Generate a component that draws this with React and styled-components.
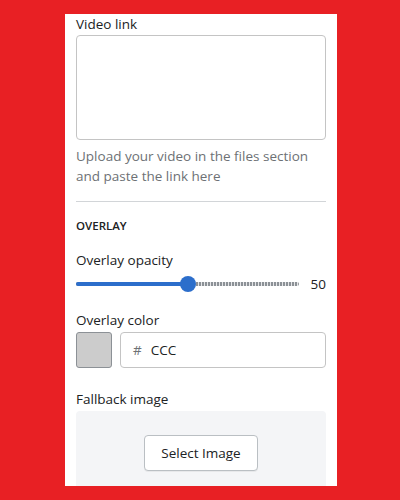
import React from "react";
import styled, { createGlobalStyle } from "styled-components";

const Global = createGlobalStyle`
  html, body { margin: 0; padding: 0; background: #e82024; }
  body { font-family: "Open Sans", "Noto Sans", sans-serif; }
  * { box-sizing: border-box; }
`;

const Page = styled.div`
  width: 400px;
  height: 500px;
  padding: 14px 0 0 65px;
  overflow: hidden;
`;

const Panel = styled.div`
  width: 272px;
  height: 472px;
  background: #fff;
  padding: 0 11px;
  overflow: hidden;
`;

const Label = styled.div`
  font-size: 13.5px;
  line-height: 20px;
  color: #202223;
  margin-top: ${(p) => p.$mt || 0}px;
`;

const TextArea = styled.div`
  margin-top: 1px;
  height: 105px;
  border: 1px solid #c4c4c4;
  border-radius: 4px;
  background: #fff;
`;

const Help = styled.div`
  margin-top: 6px;
  font-size: 13.5px;
  line-height: 20px;
  color: #6d7175;
`;

const Divider = styled.div`
  margin-top: 15px;
  height: 1px;
  background: #d2d5d8;
`;

const Heading = styled.div`
  margin-top: 16px;
  font-size: 11.5px;
  line-height: 16px;
  font-weight: 600;
  text-transform: uppercase;
  color: #202223;
`;

const SliderRow = styled.div`
  margin-top: 4px;
  height: 20px;
  display: flex;
  align-items: center;
`;

const Track = styled.div`
  position: relative;
  width: 223px;
  height: 4px;
  border-radius: 2px;
  background: repeating-linear-gradient(90deg, #8c9196 0 2px, #e4e5e7 2px 3px);
`;

const Fill = styled.div`
  position: absolute;
  left: 0;
  top: 0;
  bottom: 0;
  border-radius: 2px;
  background: #2c6ecb;
`;

const Thumb = styled.div`
  position: absolute;
  top: 50%;
  width: 16px;
  height: 16px;
  margin: -8px 0 0 -8px;
  border-radius: 50%;
  background: #2c6ecb;
`;

const Value = styled.div`
  flex: 1;
  text-align: right;
  font-size: 13.5px;
  color: #202223;
`;

const ColorRow = styled.div`
  margin-top: 2px;
  display: flex;
  gap: 8px;
`;

const Swatch = styled.div`
  width: 36px;
  height: 36px;
  border-radius: 3px;
  border: 1px solid #8c9196;
  background: #ccc;
`;

const ColorInput = styled.div`
  flex: 1;
  height: 36px;
  border: 1px solid #c4c4c4;
  border-radius: 4px;
  display: flex;
  align-items: center;
  padding-left: 12px;
  gap: 9px;
  font-size: 13.5px;
  color: #202223;
`;

const Hash = styled.span`
  color: #6d7175;
`;

const Dropzone = styled.div`
  margin-top: 2px;
  background: #f4f5f7;
  border-radius: 4px;
  padding: 24px 0 30px;
  display: flex;
  justify-content: center;
`;

const Button = styled.button`
  height: 36px;
  padding: 0 16px;
  border: 1px solid #babfc3;
  border-radius: 4px;
  background: #fff;
  font-family: inherit;
  font-size: 13.5px;
  font-weight: 500;
  color: #202223;
  box-shadow: 0 1px 0 rgba(0, 0, 0, 0.05);
`;

export default function App() {
  const value = 50;
  return (
    <>
      <Global />
      <Page>
        <Panel>
          <Label>Video link</Label>
          <TextArea />
          <Help>
            Upload your video in the files section and paste the link here
          </Help>
          <Divider />
          <Heading>Overlay</Heading>
          <Label $mt={16}>Overlay opacity</Label>
          <SliderRow>
            <Track>
              <Fill style={{ width: `${value}%` }} />
              <Thumb style={{ left: `${value}%` }} />
            </Track>
            <Value>{value}</Value>
          </SliderRow>
          <Label $mt={16}>Overlay color</Label>
          <ColorRow>
            <Swatch />
            <ColorInput>
              <Hash>#</Hash>
              <span>CCC</span>
            </ColorInput>
          </ColorRow>
          <Label $mt={21}>Fallback image</Label>
          <Dropzone>
            <Button>Select Image</Button>
          </Dropzone>
        </Panel>
      </Page>
    </>
  );
}
